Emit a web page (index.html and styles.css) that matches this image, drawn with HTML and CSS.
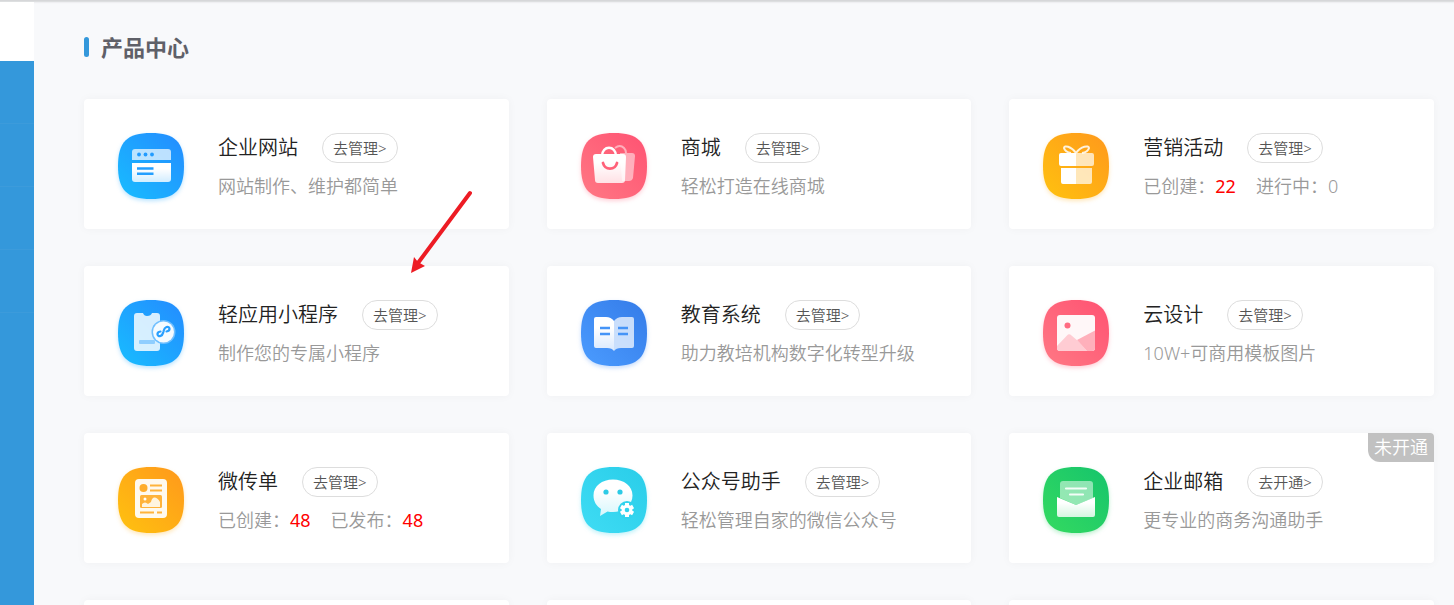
FILE: index.html
```html
<!DOCTYPE html>
<html lang="zh-CN">
<head>
    <meta charset="UTF-8">
    <title>产品中心</title>
    <link rel="stylesheet" href="styles.css">
</head>
<body>
    <div class="page">
        <div class="sidebar">
            <div class="logo"></div>
            <div class="menu">
                <div class="menu-item"></div>
                <div class="menu-item"></div>
                <div class="menu-item"></div>
                <div class="menu-item"></div>
            </div>
        </div>

        <main class="main">
            <h2 class="section-title">产品中心</h2>

            <div class="products">
                <div class="card">
                    <svg class="icon icon-blue" viewBox="0 0 66 66">
                        <defs>
                            <linearGradient id="blue" x1="1" y1="0" x2="0" y2="1"><stop offset="0" stop-color="#248bff"/><stop offset="1" stop-color="#18bdff"/></linearGradient>
                            <linearGradient id="white" x1="0" y1="0" x2="0" y2="1"><stop offset="0.3" stop-color="#fff"/><stop offset="1" stop-color="#fff" stop-opacity="0.8"/></linearGradient>
                        </defs>
                        <path fill="url(#blue)" d="M33 0C57 0 66 9 66 33S57 66 33 66 0 57 0 33 9 0 33 0Z"/>
                        <path fill="#fff" fill-opacity="0.7" d="M17 16H50Q53 16 53 19V27H14V19Q14 16 17 16Z"/>
                        <path fill="url(#white)" d="M14 30H53V46Q53 49 50 49H17Q14 49 14 46Z"/>
                        <g fill="#239cff"><circle cx="21" cy="21.5" r="1.9"/><circle cx="27.5" cy="21.5" r="1.9"/><circle cx="34" cy="21.5" r="1.9"/></g>
                        <path stroke="#239fff" stroke-width="2.4" d="M19 35.5H35.5M19 40.7H35.5"/>
                    </svg>
                    <div class="info">
                        <div class="head"><h3 class="name">企业网站</h3><button class="btn">去管理&gt;</button></div>
                        <p class="desc">网站制作、维护都简单</p>
                    </div>
                </div>

                <div class="card">
                    <svg class="icon icon-red" viewBox="0 0 66 66">
                        <defs><linearGradient id="red" x1="1" y1="0" x2="0" y2="1"><stop offset="0" stop-color="#ff5272"/><stop offset="1" stop-color="#ff7884"/></linearGradient></defs>
                        <path fill="url(#red)" d="M33 0C57 0 66 9 66 33S57 66 33 66 0 57 0 33 9 0 33 0Z"/>
                        <path fill="#fff" fill-opacity="0.5" d="M39 20H51Q54 20 54 23L52 45Q51 48 48 48H41Z"/>
                        <path fill="none" stroke="#fff" stroke-opacity="0.5" stroke-width="2" d="M34 15Q39 11 43 15Q45 17 45 20"/>
                        <path fill="none" stroke="#fff" stroke-width="2.4" d="M21 23C21 12 35 12 35 23"/>
                        <path fill="url(#white)" d="M15 21H42Q45 21 45 24L44 47Q44 50 41 50H17Q14 50 14 47L12 24Q12 21 15 21Z"/>
                        <path fill="none" stroke="#ff6179" stroke-width="2.8" stroke-linecap="round" d="M22 30C24 37.500 34 37.500 36 30"/>
                    </svg>
                    <div class="info">
                        <div class="head"><h3 class="name">商城</h3><button class="btn">去管理&gt;</button></div>
                        <p class="desc">轻松打造在线商城</p>
                    </div>
                </div>

                <div class="card">
                    <svg class="icon icon-orange" viewBox="0 0 66 66">
                        <defs><linearGradient id="orange" x1="1" y1="0" x2="0" y2="1"><stop offset="0" stop-color="#ff981c"/><stop offset="1" stop-color="#ffc20f"/></linearGradient></defs>
                        <path fill="url(#orange)" d="M33 0C57 0 66 9 66 33S57 66 33 66 0 57 0 33 9 0 33 0Z"/>
                        <path fill="none" stroke="#fff" stroke-opacity="0.85" stroke-width="2" d="M33 20C28 13 21 12 21 15Q22 19 28 20M33 20C38 13 46 12 46 15Q45 19 39 20"/>
                        <path fill="#fff" d="M33 20H18Q16 20 16 22V31Q16 33 18 33H33ZM33 35H18V49Q18 51 20 51H33Z"/>
                        <path fill="#fff" fill-opacity="0.7" d="M33 20H49Q51 20 51 22V31Q51 33 49 33H33ZM33 35H49V49Q49 51 47 51H33Z"/>
                    </svg>
                    <div class="info">
                        <div class="head"><h3 class="name">营销活动</h3><button class="btn">去管理&gt;</button></div>
                        <p class="desc"><span class="stat">已创建：<em>22</em></span><span class="stat">进行中：0</span></p>
                    </div>
                </div>

                <div class="card">
                    <svg class="icon icon-blue" viewBox="0 0 66 66">
                        <path fill="url(#blue)" d="M33 0C57 0 66 9 66 33S57 66 33 66 0 57 0 33 9 0 33 0Z"/>
                        <path fill="#fff" fill-opacity="0.82" d="M19 13H25Q26 16 29 16Q33 16 34 13H39Q42 13 42 16V48Q42 51 39 51H19Q16 51 16 48V16Q16 13 19 13Z"/>
                        <rect x="21" y="40" width="16" height="4" rx="1" fill="#8fceff"/>
                        <circle cx="45.500" cy="32" r="12" fill="#6fbfff"/>
                        <circle cx="45.500" cy="32" r="10.500" fill="#fff" fill-opacity="0.93"/>
                        <path fill="none" stroke="#289fff" stroke-width="2.2" stroke-linecap="round" d="M42.500 31.500C38 32 39 37 42.500 36C45 35 45 33 45.500 31.500C46 29.500 46 28 48.500 27C52 26 53 31 48.500 31.500"/>
                    </svg>
                    <div class="info">
                        <div class="head"><h3 class="name">轻应用小程序</h3><button class="btn">去管理&gt;</button></div>
                        <p class="desc">制作您的专属小程序</p>
                    </div>
                </div>

                <div class="card">
                    <svg class="icon icon-navy" viewBox="0 0 66 66">
                        <defs><linearGradient id="navy" x1="1" y1="0" x2="0" y2="1"><stop offset="0" stop-color="#347be8"/><stop offset="1" stop-color="#4b9cff"/></linearGradient></defs>
                        <path fill="url(#navy)" d="M33 0C57 0 66 9 66 33S57 66 33 66 0 57 0 33 9 0 33 0Z"/>
                        <path fill="url(#white)" d="M33 21Q30 17 25 17H15Q13 17 13 19V46Q13 48 15 48H26Q31 48 33 51Z"/>
                        <path fill="#fff" fill-opacity="0.72" d="M33 21Q36 17 41 17H51Q53 17 53 19V46Q53 48 51 48H40Q35 48 33 51Z"/>
                        <path stroke="#4594f7" stroke-width="2.4" d="M19 28H29M19 34H29M37 28H47M37 34H47"/>
                    </svg>
                    <div class="info">
                        <div class="head"><h3 class="name">教育系统</h3><button class="btn">去管理&gt;</button></div>
                        <p class="desc">助力教培机构数字化转型升级</p>
                    </div>
                </div>

                <div class="card">
                    <svg class="icon icon-red" viewBox="0 0 66 66">
                        <path fill="url(#red)" d="M33 0C57 0 66 9 66 33S57 66 33 66 0 57 0 33 9 0 33 0Z"/>
                        <rect x="14" y="15" width="38" height="36" rx="3" fill="#fff" fill-opacity="0.95"/>
                        <circle cx="24.500" cy="25.500" r="3" fill="#ff6b82"/>
                        <path fill="#ffccd3" d="M14 46L24 35.500Q26 33 28.500 35.500L35 41L44 51H17Q14 51 14 48Z"/>
                        <path fill="#ffb0bb" d="M34 40L52 30.500V48Q52 51 49 51H44Z"/>
                    </svg>
                    <div class="info">
                        <div class="head"><h3 class="name">云设计</h3><button class="btn">去管理&gt;</button></div>
                        <p class="desc">10W+可商用模板图片</p>
                    </div>
                </div>

                <div class="card">
                    <svg class="icon icon-orange" viewBox="0 0 66 66">
                        <path fill="url(#orange)" d="M33 0C57 0 66 9 66 33S57 66 33 66 0 57 0 33 9 0 33 0Z"/>
                        <rect x="17" y="12" width="32" height="39" rx="4" fill="#fff" fill-opacity="0.93"/>
                        <circle cx="25.500" cy="21" r="4" fill="#ffad2b"/>
                        <path stroke="#ffb33b" stroke-width="2.2" d="M32 18.500H44M32 23.500H44M22 45.500H36M39 45.500H44"/>
                        <rect x="22" y="28" width="22" height="13" rx="1.500" fill="#ffb33b"/>
                        <circle cx="27" cy="32" r="1.500" fill="#fff"/>
                        <path fill="#fff4df" d="M24 40V37Q27 34 30 37L33 35Q34 30 37 30.500Q40 31 42 35V40Z"/>
                    </svg>
                    <div class="info">
                        <div class="head"><h3 class="name">微传单</h3><button class="btn">去管理&gt;</button></div>
                        <p class="desc"><span class="stat">已创建：<em>48</em></span><span class="stat">已发布：<em>48</em></span></p>
                    </div>
                </div>

                <div class="card">
                    <svg class="icon icon-cyan" viewBox="0 0 66 66">
                        <defs><linearGradient id="cyan" x1="1" y1="0" x2="0" y2="1"><stop offset="0" stop-color="#29cde9"/><stop offset="1" stop-color="#3fdcf4"/></linearGradient></defs>
                        <path fill="url(#cyan)" d="M33 0C57 0 66 9 66 33S57 66 33 66 0 57 0 33 9 0 33 0Z"/>
                        <path fill="url(#white)" d="M32 12.500C43 12.500 51.500 19 51.500 28.500S43 45 32 45Q29 45 26.500 44.500L19 49L20 42C15.500 39 12.500 34.500 12.500 28.500C12.500 19 21 12.500 32 12.500Z"/>
                        <circle cx="25" cy="25" r="2.600" fill="#2ccbe6"/>
                        <circle cx="39" cy="25" r="2.600" fill="#2ccbe6"/>
                        <circle cx="46" cy="43" r="9" fill="#31d3ed"/>
                        <path stroke="#fff" stroke-width="4" d="M46 36V50M39.900 39.500L52.100 46.500M39.900 46.500L52.100 39.500"/>
                        <circle cx="46" cy="43" r="5.400" fill="#fff"/>
                        <circle cx="46" cy="43" r="2.300" fill="#31d3ed"/>
                    </svg>
                    <div class="info">
                        <div class="head"><h3 class="name">公众号助手</h3><button class="btn">去管理&gt;</button></div>
                        <p class="desc">轻松管理自家的微信公众号</p>
                    </div>
                </div>

                <div class="card">
                    <span class="badge">未开通</span>
                    <svg class="icon icon-green" viewBox="0 0 66 66">
                        <defs><linearGradient id="green" x1="1" y1="0" x2="0" y2="1"><stop offset="0" stop-color="#16c46c"/><stop offset="1" stop-color="#34da60"/></linearGradient></defs>
                        <path fill="url(#green)" d="M33 0C57 0 66 9 66 33S57 66 33 66 0 57 0 33 9 0 33 0Z"/>
                        <path fill="#fff" fill-opacity="0.5" d="M20 14H47Q50 14 50 17V31L33 38L17 31V17Q17 14 20 14Z"/>
                        <path stroke="#fff" stroke-opacity="0.9" stroke-width="2.2" stroke-linecap="round" d="M23 21.500H43M27 27.500H40"/>
                        <path fill="url(#white)" d="M14 30L33 38L52 30V48Q52 50 50 50H16Q14 50 14 48Z"/>
                    </svg>
                    <div class="info">
                        <div class="head"><h3 class="name">企业邮箱</h3><button class="btn">去开通&gt;</button></div>
                        <p class="desc">更专业的商务沟通助手</p>
                    </div>
                </div>

                <div class="card"></div>
                <div class="card"></div>
                <div class="card"></div>
            </div>

            <svg class="arrow" viewBox="0 0 62 84">
                <path d="M60 3L8 73" stroke="#ed1c24" stroke-width="4" stroke-linecap="round"/>
                <path d="M1 83L4 67L8 72L15 76Z" fill="#ed1c24"/>
            </svg>
        </main>
    </div>
</body>
</html>
```

FILE: styles.css
```css
* { box-sizing: border-box; margin: 0; padding: 0; }
body { font-family: "Noto Sans", "Noto Sans CJK SC", sans-serif; font-weight: 350; background: #f8f9fb; color: #333; }
.page { display: flex; height: 100vh; padding-top: 2px; overflow: hidden; box-shadow: inset 0 4px 2px -2px #d4d5d7; }

.sidebar { flex: none; width: 34px; display: flex; flex-direction: column; }
.logo { height: 59px; background: #fff; }
.menu { flex: 1; background: #3498db; }
.menu-item { height: 63px; border-bottom: 1px solid #3c9bdb; }

.main { position: relative; flex: 1; padding: 30px 20px 0 50px; }
.section-title { display: flex; align-items: center; gap: 12px; margin-bottom: 37px; font-size: 22px; line-height: 30px; font-weight: 700; color: #5f6068; }
.section-title::before { content: ""; width: 5px; height: 20px; border-radius: 3px; background: #3498db; }

.products { display: grid; grid-template-columns: repeat(3, 1fr); gap: 37px 38px; }
.card { position: relative; display: flex; align-items: flex-start; gap: 34px; min-height: 130px; padding: 34px 34px 30px; background: #fff; border-radius: 4px; box-shadow: 0 0 10px rgba(0, 0, 0, 0.04); }
.icon { flex: none; width: 66px; height: 66px; overflow: visible; }
.icon-blue { filter: drop-shadow(0 2px 2px rgba(30, 165, 255, 0.3)); }
.icon-red { filter: drop-shadow(0 2px 2px rgba(255, 100, 125, 0.3)); }
.icon-orange { filter: drop-shadow(0 2px 2px rgba(255, 175, 25, 0.3)); }
.icon-navy { filter: drop-shadow(0 2px 2px rgba(65, 140, 245, 0.3)); }
.icon-cyan { filter: drop-shadow(0 2px 2px rgba(50, 210, 235, 0.3)); }
.icon-green { filter: drop-shadow(0 2px 2px rgba(40, 205, 100, 0.3)); }

.head { display: flex; align-items: center; gap: 24px; height: 30px; }
.name { font-size: 20px; line-height: 28px; font-weight: 350; color: #222; }
.btn { height: 30px; padding: 0 10px; border: 1px solid #ddd; border-radius: 15px; background: #fff; font: inherit; font-size: 15px; line-height: 28px; color: #555; cursor: pointer; }
.btn:hover { border-color: #3498db; color: #3498db; }
.desc { display: flex; gap: 20px; margin-top: 10px; font-size: 18px; line-height: 26px; color: #999; white-space: nowrap; }
.desc em { font-style: normal; font-weight: 400; color: #f00; }
.badge { position: absolute; top: 0; right: 0; padding: 0 6px; font-size: 18px; line-height: 29px; color: #fff; background: #c1c1c1; border-radius: 0 4px 0 12px; }

.arrow { position: absolute; top: 188px; left: 376px; width: 62px; height: 84px; pointer-events: none; }
```
